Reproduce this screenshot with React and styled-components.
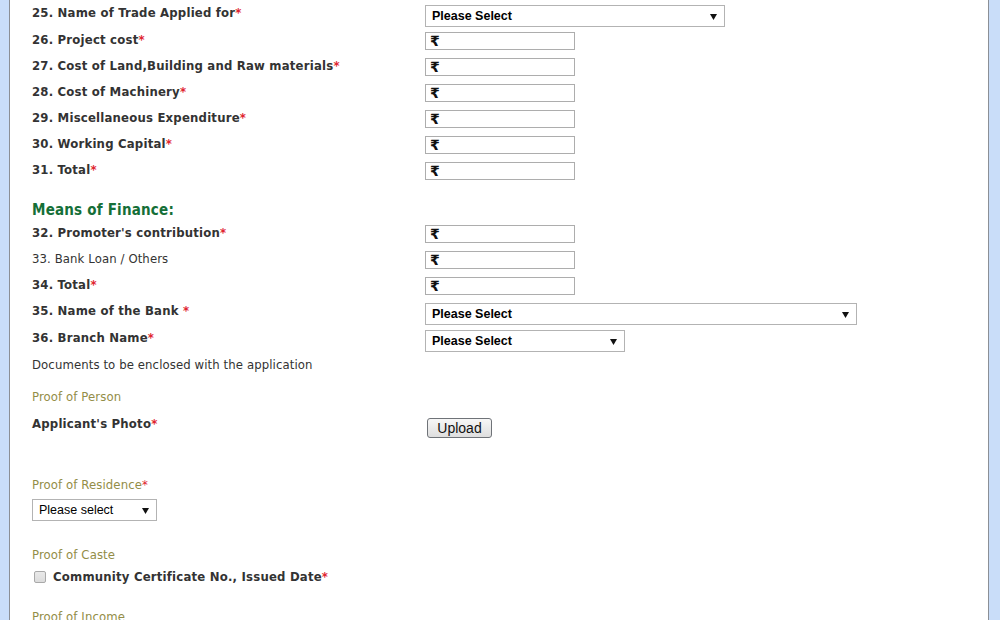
import React from "react"
import styled, { createGlobalStyle } from "styled-components"

const GlobalStyle = createGlobalStyle`
  html, body {
    margin: 0;
    padding: 0;
    background: #c9ddf9;
  }
  body {
    font-family: "DejaVu Sans Condensed", "DejaVu Sans", sans-serif;
    font-stretch: condensed;
  }
`

const Page = styled.div`
  box-sizing: border-box;
  margin-left: 9px;
  width: 980px;
  height: 620px;
  overflow: hidden;
  background: #fff;
  border-left: 1px solid #8b8f96;
  border-right: 1px solid #8b8f96;
  padding: 5px 0 0 22px;
`

const Row = styled.div`
  display: grid;
  grid-template-columns: 393px auto;
  align-items: start;
  height: ${(p) => p.$h || 26}px;
`

const Label = styled.div`
  font-size: 13px;
  line-height: 15px;
  font-weight: ${(p) => (p.$plain ? "normal" : "bold")};
  letter-spacing: ${(p) => (p.$plain ? 0.1 : 0.2)}px;
  color: #333;
`

const Req = styled.span`
  color: #e0252f;
`

const Heading = styled.div`
  padding-top: 13px;
  height: 24px;
  font-size: 15px;
  line-height: 18px;
  font-weight: bold;
  letter-spacing: 0.2px;
  color: #156f38;
`

const Note = styled.div`
  font-size: 13px;
  line-height: 15px;
  letter-spacing: 0.1px;
  color: #333;
  height: ${(p) => p.$h}px;
`

const Section = styled.div`
  font-size: 13px;
  line-height: 15px;
  letter-spacing: 0.1px;
  color: #938d47;
  height: ${(p) => p.$h}px;
`

const MoneyBox = styled.label`
  box-sizing: border-box;
  display: flex;
  align-items: flex-end;
  width: 150px;
  height: 18px;
  border: 1px solid #adadad;
  background: #fff;
  padding: 0 0 1px 4px;
`

const Rupee = styled.span`
  font-family: "DejaVu Sans", sans-serif;
  font-stretch: normal;
  font-weight: bold;
  font-size: 14px;
  line-height: 14px;
  color: #111;
`

const MoneyInput = styled.input`
  flex: 1;
  min-width: 0;
  border: none;
  outline: none;
  padding: 0;
  height: 13px;
  background: transparent;
`

const SelectBox = styled.div`
  box-sizing: border-box;
  display: flex;
  align-items: center;
  justify-content: space-between;
  width: ${(p) => p.$w}px;
  height: 22px;
  border: 1px solid #b3b3b3;
  background: #fff;
  padding: 0 7px 0 6px;
  font-family: "Liberation Sans", Arial, sans-serif;
  font-stretch: normal;
  font-size: 12.5px;
  font-weight: ${(p) => (p.$light ? "normal" : "bold")};
  color: #000;
`

const Arrow = () => (
  <svg width="7" height="7" viewBox="0 0 7 7">
    <polygon points="0,1 7,1 3.5,7" fill="#111" />
  </svg>
)

const UploadButton = styled.button`
  box-sizing: border-box;
  margin: 2px 0 0 2px;
  width: 65px;
  height: 20px;
  padding: 0;
  border: 1px solid #6f7378;
  border-radius: 3px;
  background: linear-gradient(#f7f7f7, #dedede);
  font-family: "Liberation Sans", Arial, sans-serif;
  font-stretch: normal;
  font-size: 14px;
  color: #111;
  line-height: 18px;
`

const Spacer = styled.div`
  height: ${(p) => p.$h}px;
`

const CheckRow = styled.div`
  display: flex;
  align-items: flex-start;
  gap: 7px;
  height: 40px;
  margin-top: -1px;
`

const Box = styled.span`
  box-sizing: border-box;
  display: inline-block;
  width: 12px;
  height: 12px;
  margin: 2px 0 0 2px;
  border: 1px solid #a9a9a9;
  border-radius: 2px;
  background: linear-gradient(#e9e9e9, #dcdcdc);
`

const Money = () => (
  <MoneyBox>
    <Rupee>₹</Rupee>
    <MoneyInput type="text" />
  </MoneyBox>
)

const costRows = [
  "26. Project cost",
  "27. Cost of Land,Building and Raw materials",
  "28. Cost of Machinery",
  "29. Miscellaneous Expenditure",
  "30. Working Capital",
  "31. Total",
]

export default function App() {
  return (
    <>
      <GlobalStyle />
      <Page>
        <Row $h={27}>
          <Label>25. Name of Trade Applied for<Req>*</Req></Label>
          <SelectBox $w={300}>Please Select<Arrow /></SelectBox>
        </Row>
        {costRows.map((t) => (
          <Row key={t}>
            <Label>{t}<Req>*</Req></Label>
            <Money />
          </Row>
        ))}

        <Heading>Means of Finance:</Heading>
        <Row>
          <Label>32. Promoter's contribution<Req>*</Req></Label>
          <Money />
        </Row>
        <Row>
          <Label $plain>33. Bank Loan / Others</Label>
          <Money />
        </Row>
        <Row>
          <Label>34. Total<Req>*</Req></Label>
          <Money />
        </Row>
        <Row $h={27}>
          <Label>35. Name of the Bank <Req>*</Req></Label>
          <SelectBox $w={432}>Please Select<Arrow /></SelectBox>
        </Row>
        <Row $h={27}>
          <Label>36. Branch Name<Req>*</Req></Label>
          <SelectBox $w={200}>Please Select<Arrow /></SelectBox>
        </Row>

        <Note $h={32}>Documents to be enclosed with the application</Note>
        <Section $h={27}>Proof of Person</Section>
        <Row $h={61}>
          <Label>Applicant's Photo<Req>*</Req></Label>
          <div><UploadButton>Upload</UploadButton></div>
        </Row>

        <Section $h={22}>Proof of Residence<Req>*</Req></Section>
        <SelectBox $w={125} $light>Please select<Arrow /></SelectBox>
        <Spacer $h={26} />

        <Section $h={23}>Proof of Caste</Section>
        <CheckRow>
          <Box />
          <Label>Community Certificate No., Issued Date<Req>*</Req></Label>
        </CheckRow>
        <Section $h={20}>Proof of Income</Section>
      </Page>
    </>
  )
}
